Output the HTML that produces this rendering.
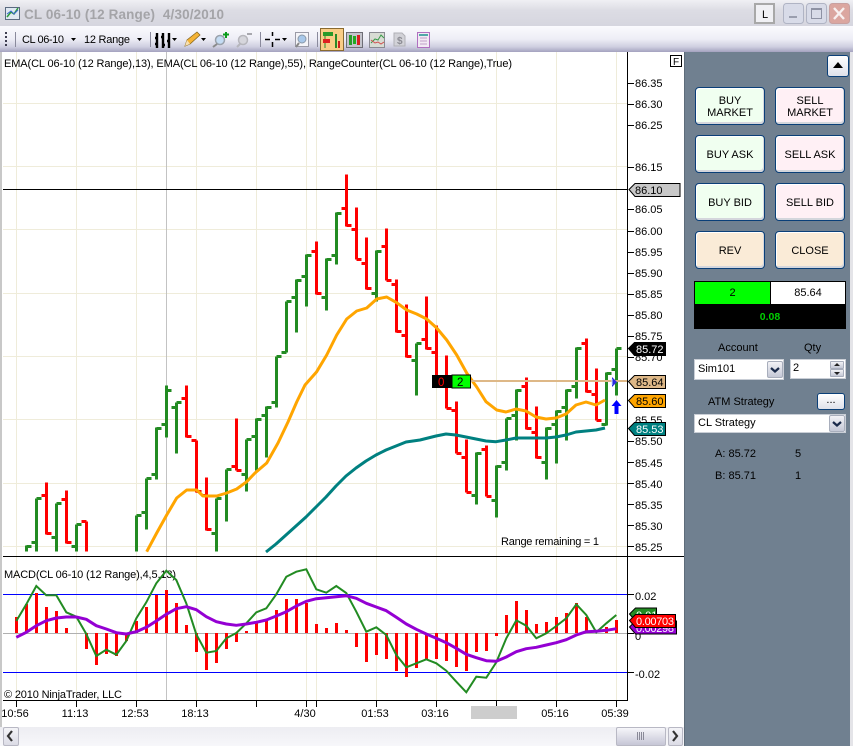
<!DOCTYPE html>
<html><head><meta charset="utf-8"><title>CL 06-10</title>
<style>
html,body{margin:0;padding:0;background:#fff}
#w{position:relative;width:853px;height:746px;overflow:hidden;background:#fff;font-family:"Liberation Sans",Arial,sans-serif;font-size:11px;color:#000}
#w div{position:absolute;box-sizing:border-box}
.btn{width:70px;height:38px;border:1px solid #0a3f78;border-radius:4px;box-shadow:inset -1px -2px 0 #d4d6dc,inset 1px 1px 0 #fff;text-align:center;font-size:11px;line-height:12px;display:flex;align-items:center;justify-content:center;padding-top:1px}
.g{background:#f0fff0}.p{background:#fff0f5}.o{background:#faebd7}
.l{white-space:nowrap;color:#000;line-height:13px}
svg{position:absolute;left:0;top:0}
</style></head><body>
<div id="w">
<div style="left:0;top:0;width:853px;height:26px;background:linear-gradient(#f0f0f4,#dcdce4 40%,#d6d6df)"></div>
<div style="left:0;top:26px;width:853px;height:26px;background:linear-gradient(#fbfbfe,#eeeef6 50%,#cfcfe0 80%,#a4a2bf)"></div>
<div style="left:0;top:52px;width:2px;height:675px;background:#c8c8c8"></div>
<div style="left:684px;top:52px;width:166px;height:694px;background:#708090;border-left:1px solid #5e6c7a"></div>
<div style="left:850px;top:52px;width:3px;height:694px;background:#e4e4e8"></div>
<div style="left:0;top:727px;width:684px;height:19px;background:linear-gradient(#ededf2,#f7f7fa)"></div>
<div style="left:3px;top:727px;width:16px;height:19px;background:linear-gradient(#f4f4f8,#dcdce6);border:1px solid #b8b8c4;border-radius:2px"></div>
<div style="left:616px;top:727px;width:50px;height:19px;background:linear-gradient(#f6f6fa,#c6c6d6);border:1px solid #b8b8c4;border-radius:2px"></div>
<div style="left:668px;top:727px;width:15px;height:19px;background:linear-gradient(#f4f4f8,#dcdce6);border:1px solid #b8b8c4;border-radius:2px"></div>

<svg width="853" height="746" viewBox="0 0 853 746" font-family="'Liberation Sans',Arial,sans-serif" font-size="11">
<!-- title icon -->
<rect x="5.5" y="7.5" width="14" height="12" fill="#dfe8f2" stroke="#5a6a80"/>
<path d="M7 17l4-5 3 2 4-6" fill="none" stroke="#2e9a3a" stroke-width="1.5"/>
<path d="M7 14l4-3 3 3 4-4" fill="none" stroke="#3a6ad0"/>
<text x="24" y="19" font-size="13.5" font-weight="bold" fill="#a4a4a8" xml:space="preserve" textLength="200">CL 06-10 (12 Range)  4/30/2010</text>
<!-- window buttons -->
<rect x="755" y="4" width="19" height="19" fill="#f0f0f4" stroke="#a8a8a8" stroke-width="2"/>
<text x="762" y="18" font-size="11">L</text>
<rect x="783.5" y="3.5" width="20" height="20" rx="3" fill="#d8dbe8" stroke="#b0b4c4"/>
<rect x="789" y="16" width="8" height="2" fill="#9a9eae"/>
<rect x="806.5" y="3.5" width="20" height="20" rx="3" fill="#d8dbe8" stroke="#b0b4c4"/>
<rect x="811.5" y="9.5" width="10" height="9" fill="none" stroke="#8e92a4"/>
<rect x="811" y="8" width="11" height="2" fill="#8e92a4"/>
<rect x="829.5" y="3.5" width="20" height="20" rx="3" fill="#dba6a0" stroke="#c8a0a0"/>
<path d="M834 8l10 11M844 8l-10 11" stroke="#f8f0f0" stroke-width="2.4"/>
<!-- toolbar -->
<g fill="#3d3d50"><rect x="5" y="32" width="2" height="2"/><rect x="5" y="36" width="2" height="2"/><rect x="5" y="40" width="2" height="2"/><rect x="5" y="44" width="2" height="2"/></g>
<g stroke="#8a8a9c"><path d="M15.5 32v15M150.5 32v15M260.5 32v15M317.5 32v15"/></g>
<text x="22" y="43" font-size="11" fill="#000" textLength="42">CL 06-10</text>
<text x="84" y="43" font-size="11" fill="#000" textLength="46">12 Range</text>
<g fill="#000"><path d="M71 38h5l-2.500 3zM137 38h5l-2.500 3zM172 38h5l-2.500 3zM201 38h5l-2.500 3zM282 38h5l-2.500 3z"/></g>
<path d="M157 33v15M163 33v15M169 33v15M155 44h2M155 38h2M161 37h2M163 45h2M167 41h2M169 36h1" stroke="#000" stroke-width="2.400" fill="none"/>
<path d="M185 46l2-6 10-8 3 3-10 9z" fill="#f5b335" stroke="#8a6a20" stroke-width=".8"/>
<path d="M185 46l2-6 3 4z" fill="#f8e0b0"/>
<circle cx="220" cy="40" r="4.500" fill="#c4dcf4" stroke="#9aa2ac" stroke-width="1.500"/><path d="M217 44l-4 3" stroke="#8a8a8a" stroke-width="2"/>
<path d="M223 34.500h6M226 32v6" stroke="#0a9c1c" stroke-width="2"/>
<circle cx="243" cy="40" r="4.500" fill="#d6d6dc" stroke="#b6b6bc" stroke-width="1.500"/><path d="M240 44l-3 3" stroke="#b6b6bc" stroke-width="2"/>
<path d="M247 34h5" stroke="#a8a8ae" stroke-width="2"/>
<path d="M265 39.500h5M275 39.500h5M272.500 32v4M272.500 42v5" stroke="#000" stroke-width="1.500"/>
<rect x="295.500" y="32.500" width="13" height="14" fill="#f4f4f8" stroke="#9a9aa6"/>
<circle cx="302" cy="39" r="4" fill="#a8c8ea" stroke="#8a98a8"/><path d="M299 43l-3 4" stroke="#888" stroke-width="2"/>
<rect x="320.500" y="28.500" width="23" height="22" fill="#f9cd86" stroke="#8a6a30"/>
<path d="M325 34v14" stroke="#2a8a2a" stroke-width="1"/>
<rect x="323" y="32" width="10" height="4" fill="#2a9a2a"/><rect x="323" y="39" width="7" height="4" fill="#e02020"/>
<rect x="335" y="34" width="2" height="14" fill="#2a8a2a"/><rect x="338" y="41" width="2" height="7" fill="#d02020"/>
<rect x="346.500" y="32.500" width="16" height="15" fill="#c4c4cc" stroke="#6e6e76"/>
<rect x="349" y="35" width="3" height="10" fill="#2a9a2a"/><rect x="353" y="36" width="3" height="8" fill="#22aa22"/><rect x="357" y="35" width="3" height="10" fill="#d82020"/>
<rect x="369.500" y="32.500" width="15" height="15" fill="#d8dcd4" stroke="#8a8a92"/>
<path d="M371 43l4-4 3 1 3-5 3 3" fill="none" stroke="#3a9a4a"/><path d="M371 40l4 3 3-1 3 2 3-2" fill="none" stroke="#d05050"/>
<path d="M394 33h8l3 3v10h-11z" fill="#d2d2d8" stroke="#b0b0b6"/>
<text x="397" y="44" font-size="10" font-weight="bold" fill="#8c8c94">$</text>
<rect x="417.500" y="32.500" width="12" height="15" fill="#f2eaf4" stroke="#b070c0"/>
<rect x="419" y="34" width="9" height="2" fill="#50a8a8"/><path d="M420 38h7M420 41h7M420 44h7" stroke="#c0a0c8"/>

<!-- chart grid -->
<g stroke="#efecda" shape-rendering="crispEdges" fill="none">
<path d="M16.500 52V700M76.500 52V700M136.500 52V700M196.500 52V700M256.500 52V700M316.500 52V700M376.500 52V700M436.500 52V700M496.500 52V700M556.500 52V700M616.500 52V700"/>
<path d="M3 103.500H627M3 166.500H627M3 229.500H627M3 293.500H627M3 356.500H627M3 419.500H627M3 483.500H627M3 546.500H627"/>
</g>
<path d="M166.500 52V700" stroke="#c0c0c0" stroke-width="1" shape-rendering="crispEdges" opacity=".95"/>
<path d="M306.500 52V700" stroke="#efecda" shape-rendering="crispEdges"/>
<path d="M3 189.500H627" stroke="#000" shape-rendering="crispEdges"/>

<!-- price bars -->
<g fill="none" stroke-width="3" shape-rendering="crispEdges" transform="translate(.5,.5)">
<path stroke="#228b22" d="M26 545V551M26 546H31M36 498V551M31 542H36M36 498H41M56 503V551M51 537H56M56 503H61M76 524V551M71 546H76M76 524H81M136 515V551M136 515H141M146 478V529M141 512H146M146 478H151M156 427V479M151 474H156M156 428H161M166 385V437M161 424H166M166 390H171M176 402V453M171 407H176M176 402H181M216 498V551M211 533H216M216 498H221M226 469V521M226 469H231M246 439V491M241 474H246M246 439H251M256 418V470M251 436H256M256 419H261M266 406V457M261 415H266M266 407H271M276 356V407M271 402H276M276 356H281M286 301V352M281 352H286M286 301H291M296 279V332M291 297H296M296 280H301M306 254V306M301 276H306M306 255H311M326 258V310M321 297H326M326 259H331M336 212V264M331 255H336M336 213H341M376 250V301M371 293H376M376 251H381M416 343V395M411 360H416M416 343H421M476 452V504M471 495H476M476 453H481M496 465V517M491 500H496M496 466H501M506 418V470M501 462H506M506 418H511M516 389V440M511 415H516M516 390H521M546 427V479M541 462H546M546 428H551M556 410V463M551 424H556M556 411H561M566 389V440M561 407H566M566 390H571M576 347V398M571 386H576M576 348H581M606 372V425M601 424H606M606 373H611M616 348V395M611 369H616M616 348H621"/>
<path stroke="#ff0000" d="M46 482V534M41 495H46M46 533H51M66 490V543M61 499H66M66 542H71M86 521V551M81 521H86M186 385V437M181 398H186M186 436H191M196 440V492M191 440H196M196 491H201M206 477V530M201 495H206M206 529H211M236 418V470M231 466H236M236 470H241M316 241V294M311 251H316M316 293H321M346 174V226M341 208H346M346 225H351M356 207V259M351 229H356M356 259H361M366 237V289M361 263H366M366 288H371M386 228V280M381 246H386M386 280H391M396 279V332M391 284H396M396 331H401M406 304V357M401 335H406M406 356H411M426 296V349M421 339H426M426 348H431M436 325V378M431 352H436M446 355V408M446 408H451M456 401V453M451 410H456M456 453H461M466 439V492M461 457H466M466 492H471M486 445V496M481 449H486M486 496H491M526 377V429M521 386H526M526 428H531M536 406V458M531 432H536M536 457H541M586 338V392M581 343H586M586 391H591M596 368V420M591 394H596M596 420H601"/>
</g>
<!-- EMAs -->
<polyline fill="none" stroke="#ffa500" stroke-width="3" stroke-linejoin="round" points="146.700,551.700 156.700,533 166.700,515 176.700,498 186.700,490 196.700,490 203,496 216.700,496 226.700,493 236.700,489 246.700,481.700 255,473 266.700,463 278,443 288,422 296.700,402 305,385 316.700,371.700 326.700,355 336.700,335 346.700,319 356.700,311 366.700,308 376.700,299 386.700,297 396.700,302.700 406.700,310 416.700,314 426.700,319 436.700,328 446.700,340 456.700,355 466.700,373 476.700,387 486,401.700 496.700,410 506,412 516,409 526,411 536,417 546,419 556,418 566,414 576,405 586,402 596,405 605,400"/>
<polyline fill="none" stroke="#008080" stroke-width="3" stroke-linejoin="round" points="266,552 276,544 286,535 296,526 306,517 316,507 326,497 336,486 346,476 356,468 366,461 376,455 386,450 396,446 406,442 420,440 436,436 446,434 456,435 466,437 476,439 486,441 496,441.700 506,440 516,438 526,438 536,438 546,438 556,437 566,435 576,432 586,431 596,430 605,428"/>
<path d="M470 381H627" stroke="#deb887" stroke-width="2" shape-rendering="crispEdges"/>
<!-- position box -->
<rect x="432" y="375" width="20" height="13" fill="#000"/><rect x="452" y="375" width="18.500" height="13" fill="#00ff00" stroke="#000"/>
<text x="438" y="386" font-size="11.500" fill="#ff0000">0</text><text x="457" y="386" font-size="11.500" fill="#000">2</text>
<!-- markers -->
<path d="M612 377l5 5-5 5z" fill="#2a2ae0"/><path d="M612 379v6" stroke="#c8d8ff"/>
<path d="M616.500 400l5 6h-3v8h-4v-8h-3z" fill="#0000ff"/>
<text x="501" y="545" font-size="11" textLength="98">Range remaining = 1</text>
<text x="4" y="67" font-size="11" textLength="508">EMA(CL 06-10 (12 Range),13), EMA(CL 06-10 (12 Range),55), RangeCounter(CL 06-10 (12 Range),True)</text>

<!-- price axis -->
<path d="M627.500 52V700" stroke="#000" shape-rendering="crispEdges"/>
<g stroke="#000" shape-rendering="crispEdges"><path d="M628 83.500h6M628 104.500h6M628 125.500h6M628 167.500h6M628 209.500h6M628 231.500h6M628 252.500h6M628 273.500h6M628 294.500h6M628 315.500h6M628 336.500h6M628 357.500h6M628 441.500h6M628 462.500h6M628 483.500h6M628 504.500h6M628 525.500h6M628 546.500h6"/></g>
<g font-size="11" fill="#000">
<text x="635" y="87">86.35</text><text x="635" y="108">86.30</text><text x="635" y="129">86.25</text><text x="635" y="171">86.15</text><text x="635" y="213">86.05</text><text x="635" y="235">86.00</text><text x="635" y="256">85.95</text><text x="635" y="277">85.90</text><text x="635" y="298">85.85</text><text x="635" y="319">85.80</text><text x="635" y="340">85.75</text><text x="635" y="361">85.70</text><text x="635" y="424">85.55</text><text x="635" y="445">85.50</text><text x="635" y="467">85.45</text><text x="635" y="488">85.40</text><text x="635" y="509">85.35</text><text x="635" y="530">85.30</text><text x="635" y="551">85.25</text>
</g>
<!-- tags -->
<path d="M629 189.500l6-6h45v13h-45z" fill="#c8c8c8" stroke="#000"/><text x="635" y="194" font-size="11">86.10</text>
<path d="M628.500 348.500l6-6h31v13h-31z" fill="#000" stroke="#000"/><text x="636" y="353" font-size="11" fill="#fff">85.72</text>
<path d="M628.500 381.500l6-6h31v13h-31z" fill="#deb887" stroke="#000"/><text x="636" y="386" font-size="11">85.64</text>
<path d="M628.500 400.500l6-6h31v13h-31z" fill="#ffa500" stroke="#000"/><text x="636" y="405" font-size="11">85.60</text>
<path d="M628.500 428.500l6-6h31v13h-31z" fill="#008080" stroke="#000"/><text x="636" y="433" font-size="11" fill="#fff">85.53</text>

<!-- panel separator -->
<path d="M3 556.500H684" stroke="#000" shape-rendering="crispEdges"/>
<rect x="0" y="557" width="2" height="1" fill="#c8c8c8"/>

<!-- MACD -->
<text x="4" y="578" font-size="11" textLength="172">MACD(CL 06-10 (12 Range),4,5,13)</text>
<text x="4" y="698" font-size="11" textLength="118">© 2010 NinjaTrader, LLC</text>
<path d="M3 633.500H627" stroke="#b0b0b0" stroke-width="1" shape-rendering="crispEdges"/>
<path d="M3 594.500H627M3 672.500H627" stroke="#0000ff" shape-rendering="crispEdges" stroke-width="1"/>
<g fill="#ff0000" shape-rendering="crispEdges">
<rect x="15" y="617" width="3" height="16"/><rect x="25" y="604" width="3" height="29"/><rect x="35" y="593" width="3" height="40"/><rect x="45" y="607" width="3" height="26"/><rect x="55" y="611" width="3" height="22"/><rect x="65" y="628" width="3" height="5"/>
<rect x="85" y="633" width="3" height="16"/><rect x="95" y="633" width="3" height="32"/><rect x="105" y="633" width="3" height="21"/><rect x="115" y="633" width="3" height="23"/><rect x="125" y="633" width="3" height="8"/>
<rect x="135" y="621" width="3" height="12"/><rect x="145" y="607" width="3" height="26"/><rect x="155" y="595" width="3" height="38"/><rect x="165" y="590" width="3" height="43"/><rect x="175" y="603" width="3" height="30"/><rect x="185" y="625" width="3" height="8"/>
<rect x="195" y="633" width="3" height="19"/><rect x="205" y="633" width="3" height="37"/><rect x="215" y="633" width="3" height="30"/><rect x="225" y="633" width="3" height="16"/><rect x="235" y="633" width="3" height="9"/>
<rect x="245" y="631" width="3" height="2"/><rect x="255" y="621" width="3" height="12"/><rect x="265" y="621" width="3" height="12"/><rect x="275" y="610" width="3" height="23"/><rect x="285" y="599" width="3" height="34"/><rect x="295" y="599" width="3" height="34"/><rect x="305" y="603" width="3" height="30"/><rect x="315" y="624" width="3" height="9"/><rect x="325" y="628" width="3" height="5"/><rect x="335" y="623" width="3" height="10"/><rect x="345" y="630" width="3" height="3"/>
<rect x="355" y="633" width="3" height="14"/><rect x="365" y="633" width="3" height="29"/><rect x="375" y="633" width="3" height="22"/><rect x="385" y="633" width="3" height="26"/><rect x="395" y="633" width="3" height="38"/><rect x="405" y="633" width="3" height="44"/><rect x="415" y="633" width="3" height="35"/><rect x="425" y="633" width="3" height="27"/><rect x="435" y="633" width="3" height="26"/><rect x="445" y="633" width="3" height="28"/><rect x="455" y="633" width="3" height="34"/><rect x="465" y="633" width="3" height="38"/><rect x="475" y="633" width="3" height="19"/><rect x="485" y="633" width="3" height="18"/><rect x="495" y="633" width="3" height="3"/>
<rect x="505" y="615" width="3" height="18"/><rect x="515" y="601" width="3" height="32"/><rect x="525" y="610" width="3" height="23"/><rect x="535" y="624" width="3" height="9"/><rect x="545" y="622" width="3" height="11"/><rect x="555" y="617" width="3" height="16"/><rect x="565" y="613" width="3" height="20"/><rect x="575" y="603" width="3" height="30"/><rect x="585" y="617" width="3" height="16"/><rect x="605" y="627" width="3" height="6"/><rect x="615" y="620" width="3" height="13"/>
</g>
<polyline fill="none" stroke="#228b22" stroke-width="2" points="16.300,621 26.300,604.300 36.300,586 46.300,595.300 56.300,595.300 66.300,612.300 76.300,616.700 86.300,634 96.300,656 106.300,649.700 116.300,654.700 126.300,641 136.300,618.300 146.300,602.300 156.300,583.300 166.300,570.700 176.300,580 186.300,603.300 196.300,634.300 206.300,652.700 216.300,651 226.300,638.300 236.300,633 246.300,623.300 256.300,612.300 266.300,608.300 276.300,594.300 286.300,576.700 296.300,571.700 306.300,569.300 316.300,589.300 326.300,592.700 336.300,586 346.300,593 356.300,611.700 366.300,631.700 376.300,627.300 386.300,635 396.300,655 406.300,667.300 416.300,663.300 426.300,659.300 436.300,663.300 446.300,670.700 456.300,681.700 466.300,692.300 476.300,676.700 486.300,677.700 496.300,662.300 506.300,638.300 516.300,620.300 526.300,625.700 536.300,638.300 546.300,633.300 556.300,626 566.300,618.300 576.300,604.300 586.300,615 596.300,632.300 606.300,623.300 616.300,615"/>
<polyline fill="none" stroke="#9400d3" stroke-width="3" stroke-linejoin="round" points="16.300,637.300 26.300,632.300 36.300,625.700 46.300,620.700 56.300,618 66.300,617 76.300,617 86.300,619.300 96.300,625.700 106.300,629 116.300,632.700 126.300,634 136.300,631.700 146.300,627.300 156.300,621 166.300,614.300 176.300,608.700 186.300,606.700 196.300,609.700 206.300,616.700 216.300,621.700 226.300,624 236.300,625.300 246.300,624 256.300,622.300 266.300,620 276.300,616 286.300,611.700 296.300,606 306.300,601.300 316.300,598.700 326.300,597.700 336.300,596.700 346.300,595.700 356.300,598.300 366.300,603.300 376.300,607 386.300,610.700 396.300,617.300 406.300,624 416.300,629.300 426.300,634 436.300,638.300 446.300,642.700 456.300,648.300 466.300,654.300 476.300,657.700 486.300,660.700 496.300,661.300 506.300,657 516.300,651.700 526.300,648.700 536.300,647.300 546.300,645 556.300,642.700 566.300,639.700 576.300,635 586.300,631.700 596.300,631.300 606.300,630.300 616.300,628.700"/>
<!-- MACD axis -->
<path d="M628 594.500h6M628 672.500h6M628 633.500h6" stroke="#000" shape-rendering="crispEdges"/>
<text x="635" y="600" font-size="11">0.02</text><text x="635" y="678" font-size="11">-0.02</text><text x="635" y="640" font-size="11">0</text>
<path d="M629.500 614l6-6h21v13h-21z" fill="#228b22" stroke="#000"/><text x="636" y="619" font-size="11" fill="#fff">0.01</text>
<path d="M629.500 627l6-6h41v13h-41z" fill="#9400d3" stroke="#000"/><text x="636" y="632" font-size="11" fill="#fff" textLength="38">0.00298</text>
<path d="M629.500 620.500l6-6h40v13h-40z" fill="#ff0000" stroke="#000"/><text x="636" y="625" font-size="11" fill="#fff" textLength="38">0.00703</text>
<!-- time axis -->
<path d="M3 700.500H628" stroke="#000" shape-rendering="crispEdges"/>
<path d="M16.500 700v7M76.500 700v7M136.500 700v7M196.500 700v7M256.500 700v7M306.500 700v7M316.500 700v7M376.500 700v7M436.500 700v7M496.500 700v7M556.500 700v7M616.500 700v7" stroke="#000" shape-rendering="crispEdges"/>
<rect x="471" y="706" width="46" height="13" fill="#cdcdcd"/>
<g font-size="11" text-anchor="middle"><text x="15" y="717">10:56</text><text x="75" y="717">11:13</text><text x="135" y="717">12:53</text><text x="195" y="717">18:13</text><text x="305" y="717">4/30</text><text x="375" y="717">01:53</text><text x="435" y="717">03:16</text><text x="555" y="717">05:16</text><text x="615" y="717">05:39</text></g>
<!-- F box -->
<rect x="670.500" y="55.500" width="11" height="11" fill="#fff" stroke="#000"/><text x="673" y="65" font-size="10">F</text>
<!-- scrollbar glyphs -->
<path d="M12 731l-4 5 4 5" fill="none" stroke="#333" stroke-width="2.200"/>
<path d="M673 731l4 5-4 5" fill="none" stroke="#333" stroke-width="2.200"/>
<path d="M637.500 732v8M639.500 732v8M641.500 732v8M643.500 732v8" stroke="#8a8a98"/>
</svg>

<!-- panel -->
<div style="left:827px;top:55px;width:22px;height:22px;background:linear-gradient(#fff,#dfe1ea);border:1px solid #0a3f78;border-radius:3px"></div>
<div style="left:833px;top:62px;width:0;height:0;border-left:5px solid transparent;border-right:5px solid transparent;border-bottom:6px solid #000"></div>

<div class="btn g" style="left:695px;top:87px">BUY<br>MARKET</div>
<div class="btn p" style="left:775px;top:87px">SELL<br>MARKET</div>
<div class="btn g" style="left:695px;top:135px">BUY ASK</div>
<div class="btn p" style="left:775px;top:135px">SELL ASK</div>
<div class="btn g" style="left:695px;top:183px">BUY BID</div>
<div class="btn p" style="left:775px;top:183px">SELL BID</div>
<div class="btn o" style="left:695px;top:231px">REV</div>
<div class="btn o" style="left:775px;top:231px">CLOSE</div>

<div style="left:694px;top:281px;width:152px;height:48px;background:#000"></div>
<div style="left:695px;top:282px;width:75px;height:22px;background:#00ff00;text-align:center;line-height:22px">2</div>
<div style="left:771px;top:282px;width:74px;height:22px;background:#fff;text-align:center;line-height:22px">85.64</div>
<div style="left:694px;top:305px;width:152px;height:24px;color:#00d000;font-weight:bold;font-size:10.500px;text-align:center;line-height:24px">0.08</div>

<div class="l" style="left:718px;top:342px">Account</div>
<div class="l" style="left:804px;top:342px">Qty</div>
<div style="left:694px;top:359px;width:90px;height:21px;background:#fff;border:1px solid #c9ced6;padding-left:3px;line-height:19px;font-size:11px">Sim101</div>
<div style="left:767px;top:361px;width:16px;height:17px;background:linear-gradient(#f2f2f6,#c4c8d6);border:1px solid #a8aebc;border-radius:2px"></div>
<div style="left:790px;top:359px;width:56px;height:20px;background:#fff;border:1px solid #c9ced6;padding-left:2px;line-height:16px;font-size:11px">2</div>
<div style="left:830px;top:361px;width:14px;height:8px;background:linear-gradient(#f2f2f6,#c4c8d6);border:1px solid #a8aebc;border-radius:1px"></div>
<div style="left:830px;top:369px;width:14px;height:8px;background:linear-gradient(#f2f2f6,#c4c8d6);border:1px solid #a8aebc;border-radius:1px"></div>
<div class="l" style="left:708px;top:396px">ATM Strategy</div>
<div style="left:817px;top:393px;width:28px;height:17px;background:linear-gradient(#fff,#dfe1ea);border:1px solid #0a3f78;border-radius:3px;text-align:center;line-height:13px">...</div>
<div style="left:694px;top:414px;width:152px;height:19px;background:#fff;border:1px solid #c9ced6;padding-left:3px;line-height:17px;font-size:11px">CL Strategy</div>
<div style="left:829px;top:415px;width:16px;height:17px;background:linear-gradient(#f2f2f6,#c4c8d6);border:1px solid #a8aebc;border-radius:2px"></div>
<div class="l" style="left:715px;top:448px">A: 85.72</div>
<div class="l" style="left:795px;top:448px">5</div>
<div class="l" style="left:715px;top:470px">B: 85.71</div>
<div class="l" style="left:795px;top:470px">1</div>
<svg width="853" height="746" viewBox="0 0 853 746" style="pointer-events:none">
<path d="M771 368l4 3.500 4-3.500M833 422l4 3.500 4-3.500" fill="none" stroke="#1a2a4a" stroke-width="2.200"/>
<path d="M834 366l3-3 3 3zM834 372l3 3 3-3z" fill="#222"/>
</svg>
</div>
</body></html>
